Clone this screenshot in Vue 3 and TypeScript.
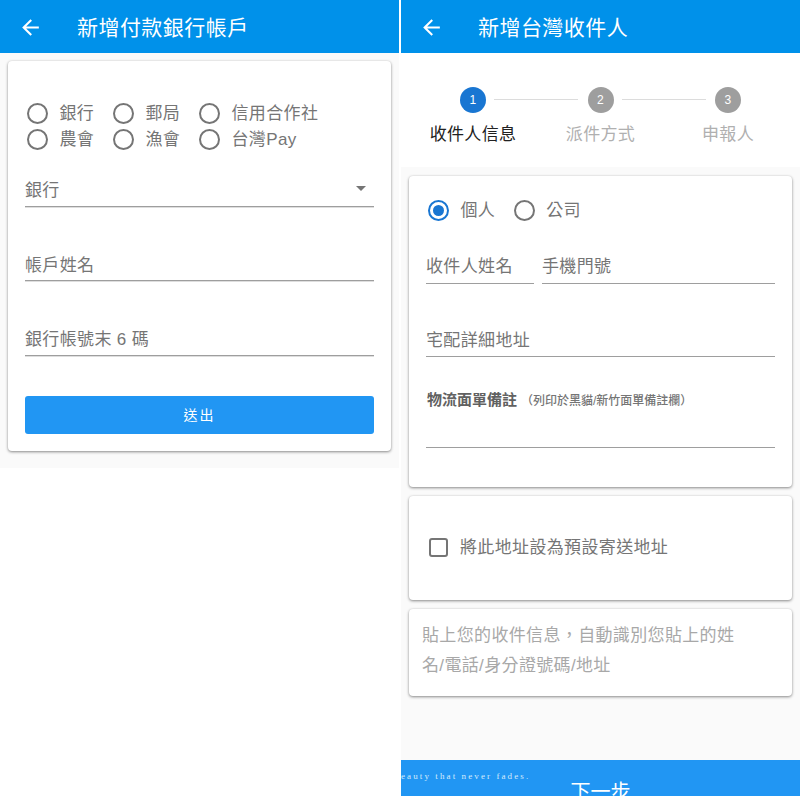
<script setup lang="ts">
const bankTypes: string[] = ['銀行', '郵局', '信用合作社', '農會', '漁會', '台灣Pay']
const steps = [
  { n: 1, label: '收件人信息', active: true },
  { n: 2, label: '派件方式', active: false },
  { n: 3, label: '申報人', active: false },
]
</script>

<template>
  <div class="page">
    <section class="panel left">
      <header class="bar">
        <svg class="back" viewBox="0 0 24 24"><path d="M20 11H7.83l5.59-5.59L12 4l-8 8 8 8 1.41-1.41L7.83 13H20v-2z" /></svg>
        <h1>新增付款銀行帳戶</h1>
      </header>
      <div class="left-body">
        <div class="card bank-card">
          <div class="radio-grid">
            <label v-for="t in bankTypes" :key="t" class="radio">
              <span class="ring"></span><span class="radio-text">{{ t }}</span>
            </label>
          </div>
          <div class="field soft select-field">
            <span>銀行</span>
            <span class="caret"></span>
          </div>
          <div class="field soft second">帳戶姓名</div>
          <div class="field soft third">銀行帳號末 6 碼</div>
          <button class="submit">送出</button>
        </div>
      </div>
    </section>

    <section class="panel right">
      <header class="bar">
        <svg class="back" viewBox="0 0 24 24"><path d="M20 11H7.83l5.59-5.59L12 4l-8 8 8 8 1.41-1.41L7.83 13H20v-2z" /></svg>
        <h1>新增台灣收件人</h1>
      </header>
      <div class="stepper">
        <div v-for="(s, i) in steps" :key="s.n" class="step" :class="{ active: s.active }">
          <span v-if="i < steps.length - 1" class="link"></span>
          <span class="dot">{{ s.n }}</span>
          <span class="step-label">{{ s.label }}</span>
        </div>
      </div>
      <div class="right-body">
        <div class="card form-card">
          <div class="person-row">
            <label class="radio big">
              <span class="ring checked"></span><span class="radio-text">個人</span>
            </label>
            <label class="radio big">
              <span class="ring"></span><span class="radio-text">公司</span>
            </label>
          </div>
          <div class="name-row">
            <div class="field name">收件人姓名</div>
            <div class="field phone">手機門號</div>
          </div>
          <div class="field address">宅配詳細地址</div>
          <div class="note-title"><b>物流面單備註</b><small>（列印於黑貓/新竹面單備註欄）</small></div>
          <div class="note-line"></div>
        </div>
        <div class="card check-card">
          <span class="box"></span>
          <span class="check-text">將此地址設為預設寄送地址</span>
        </div>
        <div class="card paste-card">貼上您的收件信息，自動識別您貼上的姓名/電話/身分證號碼/地址</div>
      </div>
      <button class="next">下一步</button>
      <span class="tagline">eauty that never fades.</span>
    </section>
  </div>
</template>

<style>
html, body { margin: 0; background: #fff; }
</style>

<style scoped>
.page {
  display: flex;
  justify-content: space-between;
  width: 800px;
  height: 796px;
  overflow: hidden;
  background: #fff;
  font-family: "Liberation Sans", "Noto Sans CJK TC", sans-serif;
  color: #757575;
  letter-spacing: 0.35px;
}
.panel { display: flex; flex-direction: column; position: relative; width: 399px; height: 796px; }
.bar {
  display: flex;
  align-items: center;
  flex: none;
  height: 53px;
  background: #0091ea;
  color: #fff;
  padding: 1px 0 0 18px;
  box-sizing: border-box;
}
.back { width: 25px; height: 25px; fill: #fff; margin-right: 22px; flex: none; }
h1 { margin: 1px 0 0; font-size: 21px; font-weight: 400; line-height: 50px; letter-spacing: 0.45px; padding-left: 12px; }
.left-body { background: #fafafa; padding: 8px 8px 17px 8px; }
.card {
  background: #fff;
  border-radius: 4px;
  box-shadow: 0 1px 3px rgba(0,0,0,.45), 0 0 2px rgba(0,0,0,.06);
  box-sizing: border-box;
}
.bank-card { height: 390px; padding: 39px 17px 0 17px; }
.radio-grid { display: grid; grid-template-columns: 86px 86px auto; grid-auto-rows: 26px; }
.radio { display: flex; align-items: center; gap: 11.5px; font-size: 17px; line-height: 26px; padding-left: 2px; }
.radio-text { line-height: 24px; padding-top: 2px; }
.ring {
  width: 21px;
  height: 21px;
  border: 2px solid #757575;
  border-radius: 50%;
  box-sizing: border-box;
  flex: none;
  position: relative;
}
.ring.checked { border-color: #1976d2; }
.ring.checked::after {
  content: "";
  position: absolute;
  inset: 3px;
  border-radius: 50%;
  background: #1976d2;
}
.field {
  border-bottom: 1px solid #9e9e9e;
  font-size: 17px;
  box-sizing: border-box;
  display: flex;
  align-items: center;
}
.soft { box-shadow: 0 1px 0 #dedede; }
.select-field { margin-top: 14px; height: 41px; padding-top: 4px; justify-content: space-between; padding-right: 8px; }
.caret { width: 0; height: 0; border: 5px solid transparent; border-top: 5px solid #757575; border-bottom: 0; }
.second { margin-top: 34px; height: 40px; padding-top: 6px; }
.third { margin-top: 35px; height: 40px; padding-top: 4px; }
.submit {
  display: block;
  width: 100%;
  height: 38px;
  margin-top: 40px;
  padding: 0 0 2px;
  border: 0;
  border-radius: 3px;
  background: #2196f3;
  color: #fff;
  font: inherit;
  font-size: 14px;
  letter-spacing: 2px;
}
.stepper {
  flex: none;
  height: 114px;
  background: #fff;
  display: grid;
  grid-template-columns: repeat(3, 127.5px);
  justify-content: center;
  padding-top: 34px;
  box-sizing: border-box;
}
.step { display: flex; flex-direction: column; align-items: center; position: relative; }
.dot {
  width: 26px;
  height: 26px;
  border-radius: 50%;
  background: #9e9e9e;
  color: #fff;
  font-size: 12px;
  display: flex;
  align-items: center;
  justify-content: center;
}
.active .dot { background: #1976d2; }
.link { position: absolute; left: 85px; width: 84px; top: 12px; height: 1px; background: #dcdcdc; }
.step-label { margin-top: 9px; font-size: 17px; line-height: 26px; color: #b0b0b0; }
.active .step-label { color: #212121; }
.right-body {
  flex: 1;
  min-height: 0;
  background: #fafafa;
  display: flex;
  flex-direction: column;
  gap: 9px;
  padding: 9px 8px 0 8px;
}
.form-card { height: 311px; padding: 21px 17px 0 17px; }
.person-row { display: flex; gap: 16.5px; }
.name-row { display: flex; gap: 8px; margin-top: 18px; }
.name { width: 108px; height: 43px; padding-top: 5px; }
.phone { flex: 1; height: 43px; padding-top: 5px; }
.address { height: 37px; margin-top: 36px; }
.note-title { margin-top: 33px; font-size: 15px; line-height: 20px; padding-left: 1px; }
.note-title b { font-weight: 700; color: #616161; letter-spacing: 0; }
.note-title small { font-size: 12px; font-weight: 500; margin-left: 4px; letter-spacing: 0; }
.note-line { height: 37px; border-bottom: 1px solid #9e9e9e; box-sizing: border-box; }
.check-card { height: 104px; display: flex; align-items: center; gap: 12px; padding: 0 0 2px 20px; font-size: 17px; }
.check-text { margin-bottom: 4px; }
.box { width: 19px; height: 19px; border: 2px solid #757575; border-radius: 3px; box-sizing: border-box; flex: none; }
.paste-card { height: 87px; padding: 12px 40px 0 13px; font-size: 17px; line-height: 30px; color: #a8a8a8; }
.next {
  flex: none;
  height: 36px;
  border: 0;
  background: #2196f3;
  color: #fff;
  font: inherit;
  font-size: 20px;
  padding: 19px 0 0;
  line-height: 26px;
  overflow: hidden;
}
.tagline {
  position: absolute;
  left: 0;
  bottom: 15px;
  font-family: "Liberation Serif", serif;
  font-size: 9px;
  letter-spacing: 2.1px;
  color: #d6ebfc;
  line-height: 10px;
}
</style>
